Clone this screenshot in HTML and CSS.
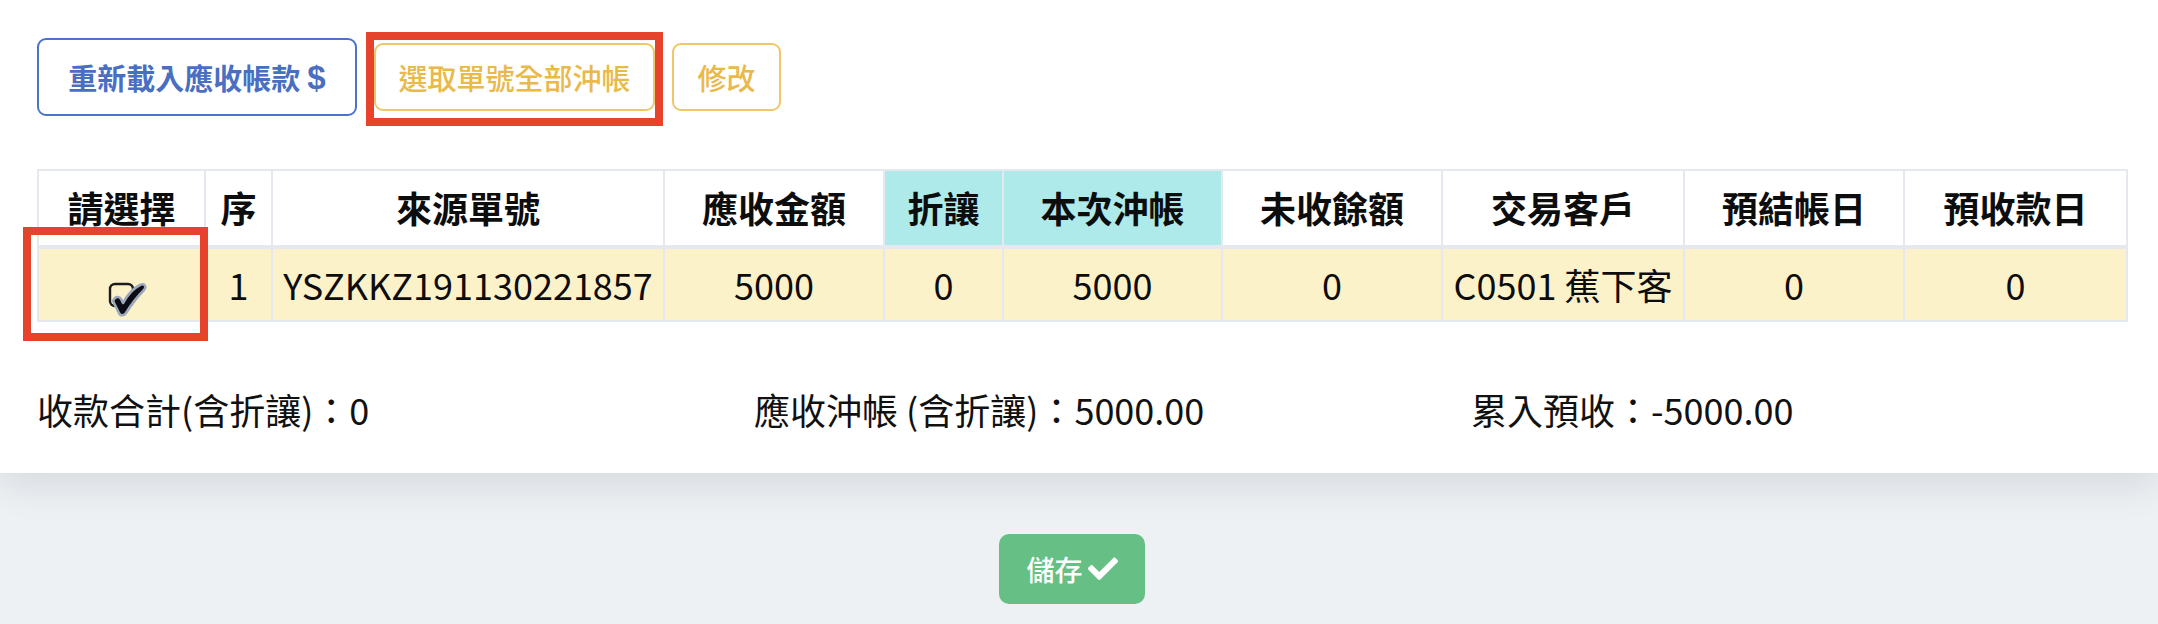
FILE: index.html
```html
<!DOCTYPE html>
<html lang="zh-Hant">
<head>
<meta charset="utf-8">
<title>應收沖帳</title>
<link rel="stylesheet" href="styles.css">
</head>
<body>
<div class="card">
  <div class="toolbar">
    <button class="btn btn-blue">重新載入應收帳款<span class="dollar">$</span></button>
    <button class="btn btn-yellow btn-all">選取單號全部沖帳</button>
    <button class="btn btn-yellow btn-edit">修改</button>
  </div>

  <table class="grid">
    <colgroup>
      <col class="c-sel"><col class="c-no"><col class="c-src"><col class="c-amt"><col class="c-disc">
      <col class="c-cur"><col class="c-rem"><col class="c-cust"><col class="c-d1"><col class="c-d2">
    </colgroup>
    <thead>
      <tr>
        <th>請選擇</th><th>序</th><th>來源單號</th><th>應收金額</th><th class="teal">折讓</th>
        <th class="teal">本次沖帳</th><th>未收餘額</th><th>交易客戶</th><th>預結帳日</th><th>預收款日</th>
      </tr>
    </thead>
    <tbody>
      <tr class="picked">
        <td class="check-cell">
          <svg class="checkmark" width="40" height="36" viewBox="0 0 40 36">
            <rect x="2" y="2" width="23" height="22" rx="5" fill="none" stroke="#1c1c1c" stroke-width="2.4"/>
            <path d="M5 19 C7 14 11 14 13 17 L15 21 C20 12 26 6 32 3 C36 1 39 4 36 8 C29 15 23 23 18 31 C16 34 12 34 11 31 Z" fill="#0c0c14" stroke="#9ea8bb" stroke-width="2.6" stroke-linejoin="round"/>
          </svg>
        </td>
        <td>1</td><td>YSZKKZ191130221857</td><td>5000</td><td>0</td>
        <td>5000</td><td>0</td><td>C0501 蕉下客</td><td>0</td><td>0</td>
      </tr>
    </tbody>
  </table>

  <div class="summary">
    <div>收款合計(含折讓)：0</div>
    <div>應收沖帳 (含折讓)：5000.00</div>
    <div>累入預收：-5000.00</div>
  </div>

  <div class="mark mark-btn"></div>
  <div class="mark mark-check"></div>
</div>

<div class="actions">
  <button class="btn-save">儲存<svg class="ok" width="30" height="24" viewBox="0 0 512 400"><path fill="#fff" d="M173.9 378.4l-166.4-166.4c-10-10-10-26.2 0-36.2l36.2-36.2c10-10 26.2-10 36.2 0L192 251.7 432.1 11.6c10-10 26.2-10 36.2 0l36.2 36.2c10 10 10 26.2 0 36.2l-294.4 294.4c-10 10-26.2 10-36.2 0z"/></svg></button>
</div>
</body>
</html>
```

FILE: styles.css
```css
* { box-sizing: border-box; }

body {
  margin: 0;
  background: #edf1f4;
  font-family: "Noto Sans CJK TC", "Noto Sans", sans-serif;
  color: #111;
}

.card {
  position: relative;
  background: #fff;
  padding: 38px 32px 37px 37px;
  box-shadow: 0 10px 36px rgba(40, 50, 60, 0.13);
}

.toolbar {
  display: flex;
  align-items: center;
  gap: 17px;
  height: 78px;
}

.btn {
  font-family: inherit;
  font-size: 29px;
  font-weight: 700;
  background: #fff;
  border-radius: 9px;
  border: 2px solid;
  display: flex;
  align-items: center;
  justify-content: center;
  white-space: nowrap;
  line-height: 1;
  padding: 0;
}

.btn-blue {
  width: 320px;
  height: 78px;
  color: #4a6fc2;
  border-color: #4b74c8;
}

.dollar {
  font-family: "Liberation Sans", sans-serif;
  font-weight: 700;
  font-size: 33px;
  margin-left: 7px;
  color: #4a6fc2;
}

.btn-yellow {
  height: 68px;
  font-weight: 500;
  color: #e9b94a;
  border-color: #efc669;
}

.btn-all { width: 281px; }
.btn-edit { width: 109px; }

.grid {
  margin-top: 53px;
  width: 2089px;
  border-collapse: collapse;
  table-layout: fixed;
  font-size: 36px;
  text-align: center;
}

.c-sel { width: 167px; }
.c-no { width: 67px; }
.c-src { width: 392px; }
.c-amt { width: 220px; }
.c-disc { width: 119px; }
.c-cur { width: 219px; }
.c-rem { width: 220px; }
.c-cust { width: 242px; }
.c-d1 { width: 220px; }
.c-d2 { width: 223px; }

.grid th,
.grid td {
  border: 2px solid #e5e8ee;
  padding: 0 8px;
  white-space: nowrap;
  line-height: 1.2;
  vertical-align: middle;
  color: #0d0d0d;
}

.grid th {
  height: 77px;
  font-weight: 700;
  background: #fff;
  border-bottom-width: 4px;
}

.grid th.teal { background: #aeeaea; }

.grid td {
  height: 74px;
  font-weight: 400;
  background: #fcf2c9;
}

.check-cell { padding: 0; }

.checkmark {
  display: block;
  margin: 30px auto 0;
  transform: translateX(6px);
}

.summary {
  display: grid;
  grid-template-columns: 717px 717px 1fr;
  margin-top: 60px;
  font-size: 36px;
  line-height: 54px;
  color: #111;
}

.mark {
  position: absolute;
  border: 8px solid #e5432b;
}

.mark-btn {
  left: 366px;
  top: 32px;
  width: 297px;
  height: 94px;
}

.mark-check {
  left: 23px;
  top: 227px;
  width: 185px;
  height: 114px;
}

.actions {
  display: flex;
  justify-content: center;
  padding-top: 61px;
  padding-right: 14px;
}

.btn-save {
  font-family: inherit;
  font-size: 28px;
  font-weight: 500;
  color: #fff;
  background: #66c086;
  border: none;
  border-radius: 10px;
  height: 70px;
  width: 146px;
  display: flex;
  align-items: center;
  justify-content: center;
  gap: 5px;
  line-height: 1;
  padding: 0;
}

.ok { display: block; }
```
